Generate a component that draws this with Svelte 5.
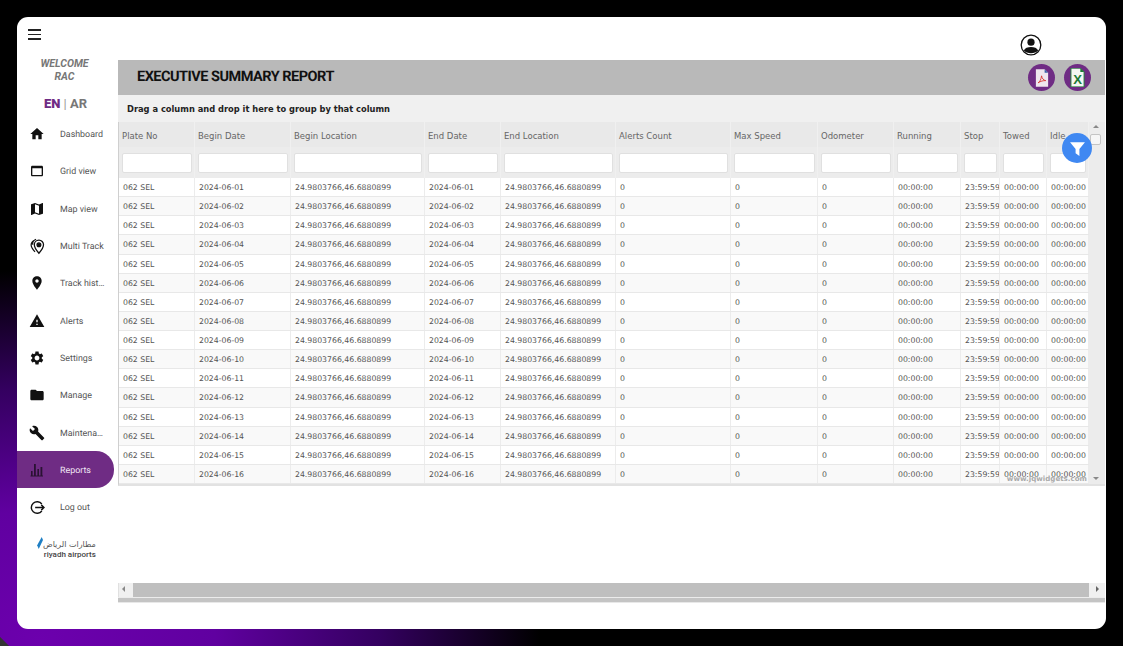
<script lang="ts">
    const menu = [
        { label: "Dashboard", icon: "home" },
        { label: "Grid view", icon: "grid" },
        { label: "Map view", icon: "map" },
        { label: "Multi Track", icon: "multi" },
        { label: "Track history", icon: "pin" },
        { label: "Alerts", icon: "alert" },
        { label: "Settings", icon: "gear" },
        { label: "Manage", icon: "folder" },
        { label: "Maintenance", icon: "wrench" },
        { label: "Reports", icon: "bars", active: true },
        { label: "Log out", icon: "logout" },
    ];

    const paths: Record<string, string> = {
        home: "M10 20v-6h4v6h5v-8h3L12 3 2 12h3v8z",
        grid: "M19 4H5c-1.11 0-2 .9-2 2v12c0 1.1.89 2 2 2h14c1.1 0 2-.9 2-2V6c0-1.1-.89-2-2-2zm0 14H5V8h14v10z",
        map: "M20.5 3l-.16.03L15 5.1 9 3 3.36 4.9c-.21.07-.36.25-.36.48V20.5c0 .28.22.5.5.5l.16-.03L9 18.9l6 2.1 5.64-1.9c.21-.07.36-.25.36-.48V3.5c0-.28-.22-.5-.5-.5zM15 19l-6-2.11V5l6 2.11V19z",
        pin: "M12 2C8.13 2 5 5.13 5 9c0 5.25 7 13 7 13s7-7.75 7-13c0-3.87-3.13-7-7-7zm0 9.5c-1.38 0-2.5-1.12-2.5-2.5s1.12-2.5 2.5-2.5 2.5 1.12 2.5 2.5-1.12 2.5-2.5 2.5z",
        alert: "M1 21h22L12 2 1 21zm12-3h-2v-2h2v2zm0-4h-2v-4h2v4z",
        gear: "M19.14 12.94c.04-.3.06-.61.06-.94 0-.32-.02-.64-.07-.94l2.03-1.58c.18-.14.23-.41.12-.61l-1.92-3.32c-.12-.22-.37-.29-.59-.22l-2.39.96c-.5-.38-1.03-.7-1.62-.94l-.36-2.54c-.04-.24-.24-.41-.48-.41h-3.84c-.24 0-.43.17-.47.41l-.36 2.54c-.59.24-1.13.57-1.62.94l-2.39-.96c-.22-.08-.47 0-.59.22L2.74 8.87c-.12.21-.08.47.12.61l2.03 1.58c-.05.3-.09.63-.09.94s.02.64.07.94l-2.03 1.58c-.18.14-.23.41-.12.61l1.92 3.32c.12.22.37.29.59.22l2.39-.96c.5.38 1.03.7 1.62.94l.36 2.54c.05.24.24.41.48.41h3.84c.24 0 .44-.17.47-.41l.36-2.54c.59-.24 1.13-.56 1.62-.94l2.39.96c.22.08.47 0 .59-.22l1.92-3.32c.12-.22.07-.47-.12-.61l-2.01-1.58zM12 15.6c-1.98 0-3.6-1.62-3.6-3.6s1.62-3.6 3.6-3.6 3.6 1.62 3.6 3.6-1.62 3.6-3.6 3.6z",
        folder: "M10 4H4c-1.1 0-1.99.9-1.99 2L2 18c0 1.1.9 2 2 2h16c1.1 0 2-.9 2-2V8c0-1.1-.9-2-2-2h-8l-2-2z",
        wrench: "M22.7 19l-9.1-9.1c.9-2.3.4-5-1.5-6.9-2-2-5-2.4-7.4-1.3L9 6 6 9 1.6 4.7C.4 7.1.9 10.1 2.9 12.1c1.9 1.9 4.6 2.4 6.9 1.5l9.1 9.1c.4.4 1 .4 1.4 0l2.3-2.3c.5-.4.5-1.1.1-1.4z",
    };

    const columns = [
        "Plate No", "Begin Date", "Begin Location", "End Date", "End Location", "Alerts Count",
        "Max Speed", "Odometer", "Running", "Stop", "Towed", "Idle",
    ];

    const loc = "24.9803766,46.6880899";
    const rows = Array.from({ length: 16 }, (_, i) => {
        const d = `2024-06-${String(i + 1).padStart(2, "0")}`;
        return ["062 SEL", d, loc, d, loc, "0", "0", "0", "00:00:00", "23:59:59", "00:00:00", "00:00:00"];
    });
</script>

<div class="window">
    <aside class="sidebar">
        <button class="burger" aria-label="Menu"><span></span><span></span><span></span></button>
        <div class="welcome">WELCOME<br />RAC</div>
        <div class="lang"><b>EN</b> <i>|</i> <em>AR</em></div>

        <nav>
            {#each menu as item}
                <div class="item" class:active={item.active}>
                    <span class="icon">
                        {#if item.icon === "multi"}
                            <svg viewBox="0 0 24 24" width="17" height="17">
                                <path d="M14 3c-3.600 0-6.500 2.900-6.500 6.500C7.500 14 14 21.500 14 21.500S20.500 14 20.500 9.500C20.500 5.900 17.600 3 14 3zm0 3.800a2.700 2.700 0 1 1 0 5.400 2.700 2.700 0 0 1 0-5.400z" fill="#fff" stroke="#111" stroke-width="1.800" />
                                <circle cx="14" cy="9.500" r="2.600" fill="#111" />
                                <path d="M7 3.500C4.500 5 3 7.300 3 10c0 3 2.500 6.500 5.500 9.500M10 1.800C6.300 3 5 6.500 5.200 9.500" fill="none" stroke="#111" stroke-width="1.700" />
                            </svg>
                        {:else if item.icon === "bars"}
                            <svg viewBox="0 0 14 14" width="14" height="14" fill="#2a1233">
                                <rect x="1" y="8" width="1.600" height="5" />
                                <rect x="4" y="1" width="1.800" height="12" />
                                <rect x="7.400" y="6" width="1.600" height="7" />
                                <rect x="10.500" y="4" width="1.800" height="9" />
                                <rect x="0.500" y="12.500" width="12.500" height="1" />
                            </svg>
                        {:else if item.icon === "logout"}
                            <svg viewBox="0 0 16 16" width="15" height="15" fill="none" stroke="#111" stroke-width="1.500">
                                <path d="M12.600 4.300A6.200 6.200 0 1 0 12.600 11.700" />
                                <path d="M5.500 8H15M12 5.200 15 8l-3 2.800" />
                            </svg>
                        {:else}
                            <svg viewBox="0 0 24 24" width="16" height="16"><path d={paths[item.icon]} fill="#111" /></svg>
                        {/if}
                    </span>
                    <span class="label">{item.label}</span>
                </div>
            {/each}
        </nav>

        <div class="logo">
            <svg viewBox="0 0 7 14" width="6" height="14"><path d="M5.500 0 7 3.500 2 14 .2 9.500z" fill="#1f7fc4" /></svg>
            <div class="logo-text">
                <span class="ar" dir="rtl">مطارات الرياض</span>
                <span class="en">riyadh airports</span>
            </div>
        </div>
    </aside>

    <main>
        <div class="topbar">
            <svg class="user" viewBox="0 0 22 22" width="22" height="22">
                <circle cx="11" cy="11" r="9.800" fill="#fff" stroke="#111" stroke-width="1.300" />
                <circle cx="11" cy="8.200" r="3.600" fill="#111" />
                <path d="M3.800 16.500c1-2.600 4-3.600 7.200-3.600s6.200 1 7.200 3.600c-1.800 1.700-4.300 2.800-7.200 2.800s-5.400-1.100-7.200-2.800z" fill="#111" />
            </svg>
        </div>

        <div class="title">
            <h1>EXECUTIVE SUMMARY REPORT</h1>
            <div class="exports">
                <span class="round">
                    <svg viewBox="0 0 16 20" width="14" height="18">
                        <path d="M1 0h10l4 4v16H1z" fill="#efe6ee" />
                        <path d="M11 0l4 4h-4z" fill="#3a62a8" />
                        <path d="M3.500 15.500c2-1 3.500-4 4-8 .6 3 2 5 4.800 5.500-2.800-.2-5.800.6-8.800 2.500z" fill="none" stroke="#d8352b" stroke-width="1" />
                    </svg>
                </span>
                <span class="round">
                    <svg viewBox="0 0 16 20" width="15" height="19">
                        <path d="M1 0h10l4 4v16H1z" fill="#f4f7f2" stroke="#1c7a35" />
                        <path d="M11 0l4 4h-4z" fill="#1c7a35" />
                        <text x="8" y="16.500" text-anchor="middle" class="xl">X</text>
                    </svg>
                </span>
            </div>
        </div>

        <div class="grid-wrap">
            <div class="group">Drag a column and drop it here to group by that column</div>

            <div class="table-area">
                <div class="table">
                    <div class="head row">
                        {#each columns as c}
                            <div class="hcell">
                                <span class="hlabel">{c}</span>
                                <input type="text" aria-label={c} />
                            </div>
                        {/each}
                    </div>
                    {#each rows as r, i}
                        <div class="row body" class:alt={i % 2 === 1}>
                            {#each r as v}
                                <div class="cell">{v}</div>
                            {/each}
                        </div>
                    {/each}
                </div>

                <div class="vscroll">
                    <span class="up"></span>
                    <span class="thumb"></span>
                    <span class="down"></span>
                </div>

                <span class="watermark">www.jqwidgets.com</span>
                <button class="fab" aria-label="Filter">
                    <svg viewBox="0 0 16 16" width="17" height="17"><path d="M1 2h14L9.800 8.500V15L6.200 12.500V8.500z" fill="#fff" /></svg>
                </button>
            </div>

            <div class="empty"></div>

            <div class="hscroll">
                <span class="harrow"><span class="left"></span></span>
                <span class="hthumb"></span>
                <span class="harrow end"><span class="right"></span></span>
            </div>
            <div class="hfoot"></div>
        </div>
    </main>
</div>

<style>
    :global(body) {
        margin: 0;
        height: 646px;
        overflow: hidden;
        background:
            linear-gradient(45deg, #333 6px, transparent 7px),
            radial-gradient(ellipse 500px 370px at 40px 640px, #6c00ad 0%, #6000a0 35%, #340060 68%, #000 100%),
            #000;
    }

    .window {
        box-sizing: border-box;
        width: 1089px;
        height: 612px;
        margin: 17px 0 0 17px;
        background: #fff;
        border-radius: 11px;
        display: flex;
        overflow: hidden;
        font-family: Roboto, sans-serif;
    }

    .sidebar {
        width: 101px;
        flex: none;
        display: flex;
        flex-direction: column;
    }

    .burger {
        display: flex;
        flex-direction: column;
        gap: 3px;
        width: 13px;
        margin: 12px 0 0 11px;
        padding: 0;
        border: 0;
        background: none;
    }

    .burger span {
        height: 1.500px;
        background: #222;
    }

    .welcome {
        margin-top: 17px;
        height: 26px;
        text-align: center;
        font-size: 10.500px;
        line-height: 13px;
        font-weight: 700;
        font-style: italic;
        color: #777;
        width: 95px;
    }

    .lang {
        margin-top: 13px;
        width: 97px;
        text-align: center;
        font-size: 13px;
        line-height: 16px;
        font-weight: 700;
        color: #777;
    }

    .lang b {
        color: #6f2c84;
    }

    .lang i {
        font-style: normal;
        font-weight: 400;
        color: #999;
    }

    .lang em {
        font-style: normal;
    }

    nav {
        margin-top: 4px;
        display: flex;
        flex-direction: column;
    }

    .item {
        height: 37.300px;
        width: 97px;
        display: flex;
        align-items: center;
        box-sizing: border-box;
        border-radius: 0 18px 18px 0;
    }

    .item.active {
        background: #6f2c84;
    }

    .item.active .label {
        color: #f1e6f4;
    }

    .icon {
        width: 40px;
        flex: none;
        display: flex;
        justify-content: center;
    }

    .icon svg {
        display: block;
    }

    .label {
        width: 46px;
        margin-left: 3px;
        padding-top: 2px;
        font-size: 8.900px;
        text-rendering: geometricPrecision;
        color: #555;
        white-space: nowrap;
        overflow: hidden;
        text-overflow: ellipsis;
    }

    .logo {
        margin: 10px 0 0 20px;
        display: flex;
        gap: 0;
    }

    .logo-text {
        display: flex;
        flex-direction: column;
        align-items: flex-end;
        margin-top: 4px;
    }

    .logo-text .ar {
        font-family: "DejaVu Sans", sans-serif;
        font-size: 8px;
        line-height: 10px;
        color: #555;
        white-space: nowrap;
    }

    .logo-text .en {
        font-family: Roboto, sans-serif;
        font-size: 8px;
        font-weight: 500;
        line-height: 9px;
        color: #444;
        white-space: nowrap;
    }

    main {
        flex: 1;
        min-width: 0;
        display: flex;
        flex-direction: column;
    }

    .topbar {
        height: 43px;
        flex: none;
        display: flex;
        justify-content: flex-end;
        align-items: flex-start;
    }

    .user {
        margin: 17px 64px 0 0;
    }

    .title {
        height: 35px;
        flex: none;
        margin-right: 1px;
        background: #b9b9b9;
        display: flex;
        align-items: center;
        justify-content: space-between;
    }

    h1 {
        margin: 0 0 2px 19px;
        font-family: Roboto, sans-serif;
        font-size: 14.500px;
        font-weight: 700;
        letter-spacing: -0.500px;
        text-rendering: geometricPrecision;
        color: #111;
    }

    .exports {
        display: flex;
        gap: 9px;
        margin-right: 14px;
    }

    .round {
        width: 27px;
        height: 27px;
        border-radius: 50%;
        background: #6f2c84;
        display: flex;
        align-items: center;
        justify-content: center;
    }

    .xl {
        font-family: "Liberation Sans", sans-serif;
        font-size: 14px;
        font-weight: 700;
        fill: #1c7a35;
    }

    .grid-wrap {
        flex: 1;
        display: flex;
        flex-direction: column;
        margin-right: 1px;
        font-family: "DejaVu Sans", sans-serif;
    }

    .group {
        height: 27px;
        flex: none;
        display: flex;
        align-items: center;
        box-sizing: border-box;
        padding-left: 9px;
        background: #f0f0f0;
        font-size: 8.300px;
        font-weight: 700;
        color: #222;
    }

    .table-area {
        position: relative;
        display: flex;
        flex: none;
        border-left: 1px solid #cfcfcf;
        border-bottom: 2px solid #e2e2e2;
    }

    .table {
        width: 970px;
        flex: none;
    }

    .row {
        display: grid;
        grid-template-columns: 76px 96px 134px 76px 115px 115px 87px 76px 67px 39px 47px 42px;
    }

    .head {
        height: 56px;
        background: linear-gradient(#e9e9e9 0, #e9e9e9 25px, #ececec 25px);
    }

    .hcell {
        display: flex;
        flex-direction: column;
        min-width: 0;
        border-right: 1px solid #f0f0f0;
        box-sizing: border-box;
        overflow: hidden;
    }

    .hlabel {
        height: 28px;
        margin-bottom: 3px;
        padding: 0 0 0 3px;
        display: flex;
        align-items: center;
        font-size: 8.500px;
        color: #666;
        white-space: nowrap;
    }

    input {
        box-sizing: border-box;
        height: 20px;
        margin: 0 3px;
        width: calc(100% - 5px);
        min-width: 0;
        padding: 0;
        border: 1px solid #e0e0e0;
        border-radius: 2px;
        background: #fff;
    }

    .body {
        height: 19.130px;
        background: #fff;
        box-sizing: border-box;
        border-bottom: 1px solid #e8e8e8;
    }

    .body.alt {
        background: #f9f9f9;
    }

    .cell {
        box-sizing: border-box;
        padding: 0 0 0 4px;
        border-right: 1px solid #ececec;
        font-size: 7.750px;
        line-height: 19px;
        color: #555;
        white-space: nowrap;
        overflow: hidden;
    }

    .vscroll {
        flex: 1;
        position: relative;
        background: #ececec;
    }

    .up,
    .down,
    .left,
    .right {
        position: absolute;
        width: 0;
        height: 0;
        border: 3.500px solid transparent;
    }

    .up {
        left: 4px;
        top: 0;
        border-bottom-color: #888;
    }

    .down {
        left: 4px;
        bottom: 1px;
        border-top-color: #888;
    }

    .thumb {
        position: absolute;
        left: 1px;
        top: 12px;
        width: 9px;
        height: 9px;
        background: #f6f6f6;
        border: 1px solid #c4c4c4;
        border-radius: 2px;
    }

    .watermark {
        position: absolute;
        right: 18px;
        bottom: 1px;
        font-size: 7.100px;
        font-weight: 700;
        color: #aaa;
    }

    .fab {
        position: absolute;
        left: 943px;
        top: 11px;
        width: 30px;
        height: 30px;
        padding: 0;
        border: 0;
        border-radius: 50%;
        background: #3f88f2;
        display: flex;
        align-items: center;
        justify-content: center;
    }

    .empty {
        flex: 1;
    }

    .hscroll {
        height: 14px;
        flex: none;
        display: flex;
        border-left: 1px solid #e0e0e0;
        background: #f0f0f0;
    }

    .harrow {
        width: 14px;
        flex: none;
        position: relative;
    }

    .harrow.end {
        width: 16px;
    }

    .left {
        left: 0;
        top: 3px;
        border-right-color: #888;
    }

    .right {
        left: 7px;
        top: 3px;
        border-left-color: #666;
    }

    .hthumb {
        flex: 1;
        background: #bfbfbf;
    }

    .hfoot {
        height: 6px;
        margin-bottom: 26px;
        flex: none;
        background: #c4c4c4;
        border-bottom: 1px solid #e8e8e8;
        border-top: 1px solid #ececec;
        box-sizing: border-box;
    }
</style>
